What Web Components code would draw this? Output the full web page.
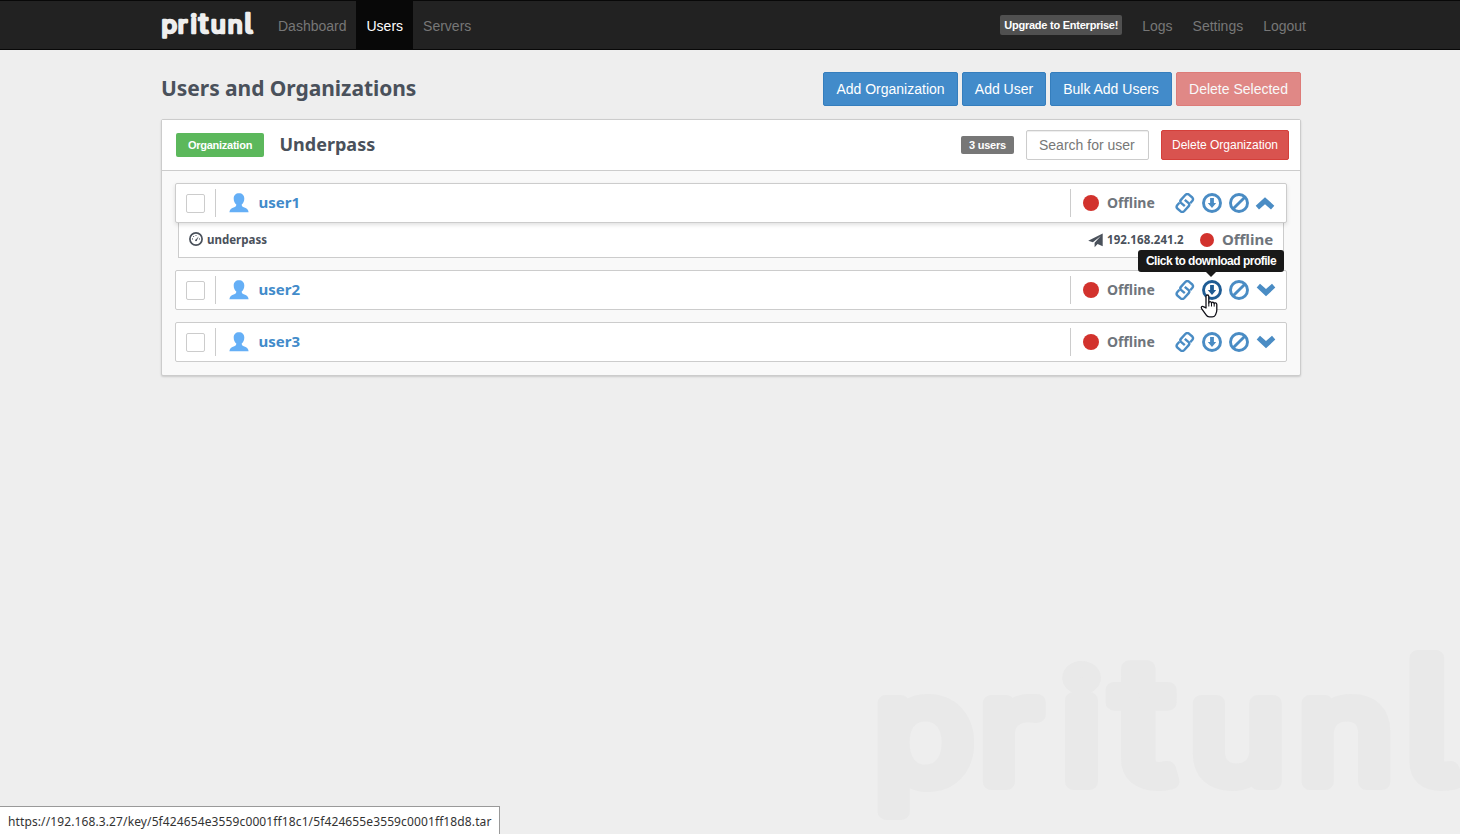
<!DOCTYPE html>
<html lang="en">
<head>
<meta charset="utf-8">
<title>Pritunl</title>
<style>
html,body{margin:0;height:100%;overflow:hidden}
body{background:#eee;font:14px/20px "Liberation Sans",Arial,sans-serif;color:#4a515b;--head:"Noto Sans","Open Sans",sans-serif}
</style>
</head>
<body>
<pt-app></pt-app>
<script>
const def = (name, html, setup) => customElements.define(name, class extends HTMLElement {
  constructor() {
    super();
    this.attachShadow({mode: 'open'}).innerHTML = html;
  }
  connectedCallback() { if (setup) setup(this, this.shadowRoot); }
});

const linkHalf = 'M9.800 13.200L6 9.900Q4.600 8.400 5.900 6.900L10.300 2Q12 .3 13.900 1.600L17.300 4.500Q18.700 6 17.400 7.700L15.200 10.200';
const icons = {
  user: ['0 0 20 20', '<path fill="#65aff6" d="M10 .3c3.200 0 5.300 2 5.300 5.300 0 2.700-1 4.800-2.600 6 0 1.500.6 2.200 2 2.700 2.900 1 4.700 2.100 4.900 5H.4c.2-2.900 2-4 4.900-5 1.400-.5 2-1.200 2-2.700-1.600-1.200-2.600-3.300-2.600-6C4.700 2.300 6.800.3 10 .3z"/>'],
  link: ['0 0 20 20', `<g fill="none" stroke="currentColor" stroke-width="2.400" stroke-linejoin="round"><path d="${linkHalf}"/><path transform="rotate(180 9.800 10)" d="${linkHalf}"/></g>`],
  down: ['0 0 20 20', '<circle cx="10" cy="10" r="8.500" fill="none" stroke="currentColor" stroke-width="2.900"/><path fill="currentColor" d="M8.100 5h3.800v5h2.300L10 14.900 5.800 10h2.300z"/>'],
  ban: ['0 0 20 20', '<g fill="none" stroke="currentColor" stroke-width="2.900"><circle cx="10" cy="10" r="8.500"/><path d="M4.200 15.800L15.800 4.200"/></g>'],
  up: ['0 0 20 20', '<path fill="currentColor" d="M10 4.300l9.300 8.400-3.300 3.900-6-5.300-6 5.300-3.300-3.900z"/>'],
  more: ['0 0 20 20', '<path fill="currentColor" d="M10 16.300L.7 7.600 4 3.800l6 5.300 6-5.300 3.300 3.800z"/>'],
  gauge: ['0 0 14 14', '<circle cx="7" cy="7" r="6.100" fill="none" stroke="currentColor" stroke-width="1.700"/><path d="M6.200 8.200l3.600-3.900-2.200 4.800z" fill="currentColor"/><g fill="currentColor"><circle cx="3.500" cy="6.900" r=".6"/><circle cx="4.600" cy="4.500" r=".6"/><circle cx="7" cy="3.500" r=".6"/><circle cx="10.500" cy="6.900" r=".6"/><circle cx="7" cy="8.400" r=".8"/></g>'],
  plane: ['0 0 15 15', '<path fill="currentColor" d="M14.700.4v12.800L9.600 11 6.600 14.200V9.700L12.800 3 4.900 9.200.2 7.800z"/>']
};
def('pt-icon', '<style>:host{display:block;width:20px;height:20px;flex:none}svg{display:block;width:100%;height:100%}</style><svg></svg>', (h, r) => {
  const [box, body] = icons[h.getAttribute('name')];
  const s = r.querySelector('svg');
  s.setAttribute('viewBox', box);
  s.innerHTML = body;
});

def('pt-wordmark', `<style>:host{display:block;line-height:0}svg{display:block;width:100%;height:100%;overflow:visible}
text{font:400 145px Inter,sans-serif;font-feature-settings:"cv05";fill:currentColor;stroke:currentColor;stroke-width:16px;stroke-linejoin:round}
.i{font-size:151px}.t{font-size:168px}.l{font-size:170px}</style>
<svg viewBox="0 0 582 182" preserveAspectRatio="none"><text transform="scale(1.120 1)" y="132" x="-3.500 90.500 163.500 209.500 278 375 469.500">pr<tspan class="i">i</tspan><tspan class="t">t</tspan>un<tspan class="l">l</tspan></text></svg>`);

def('pt-nav-link', `<style>:host{display:block;height:48px;line-height:50px;padding:0 10px;color:#777}
:host([active]){background:#080808;color:#fff;margin-left:-1px;padding-left:11px}</style><slot></slot>`);

def('pt-navbar', `<style>:host{display:flex;height:48px;background:#222;border:solid #080808;border-width:1px 0;padding:0 144px 0 162px}
pt-wordmark{width:91px;height:29.500px;margin:11px 15px 0 0;color:#eee}
.sp{flex:1}
.up{align-self:flex-start;box-sizing:border-box;margin:14px 10px 0 0;width:122px;height:20px;background:#505050;border-radius:2px;color:#fff;font:bold 11px/20px "Liberation Sans",sans-serif;letter-spacing:-.24px;text-align:center;white-space:nowrap}</style>
<pt-wordmark></pt-wordmark><pt-nav-link>Dashboard</pt-nav-link><pt-nav-link active>Users</pt-nav-link><pt-nav-link>Servers</pt-nav-link>
<div class="sp"></div><div class="up">Upgrade to Enterprise!</div><pt-nav-link>Logs</pt-nav-link><pt-nav-link>Settings</pt-nav-link><pt-nav-link>Logout</pt-nav-link>`);

def('pt-button', `<style>:host{display:block;box-sizing:border-box;height:34px;line-height:32px;border:1px solid #357ebd;background:#428bca;color:#fff;border-radius:2px;text-align:center;white-space:nowrap}
:host([kind=danger]){background:#d9534f;border-color:#d43f3a}
:host([disabled]){opacity:.65}
:host([small]){height:30px;line-height:28px;font-size:12px}</style><slot></slot>`);

def('pt-status', `<style>:host{display:flex;align-items:center;font:bold 14px/20px var(--head);color:#6f757c}
i{flex:none;width:16px;height:16px;border-radius:50%;background:#d2322d;margin-right:8px}
:host([sub]) i{width:14px;height:14px}
:host([sub]) span{position:relative;top:-1px}</style><i></i><span>Offline</span>`);

def('pt-tooltip', `<style>:host{position:absolute;z-index:2;width:146px;height:22px;border-radius:3px;background:#191919;color:#fff;font:bold 12px/22px "Liberation Sans",sans-serif;text-align:center;white-space:nowrap;letter-spacing:-.5px}
:host::after{content:"";position:absolute;left:68px;top:22px;border:5px solid transparent;border-top-color:#191919;border-bottom:0}</style><slot></slot>`);

def('pt-cursor', `<style>:host{position:absolute;z-index:3;width:18px;height:24px}svg{display:block}</style>
<svg width="18" height="24" viewBox="0 0 18 24"><path fill="#fff" stroke="#101018" stroke-width="1.300" stroke-linejoin="round" d="M6 14V2.500C6 .5 8.800.5 8.800 2.500V9c0-1.800 2.700-1.700 2.700.3 0-1.600 2.700-1.400 2.700.5 0-1.400 2.600-1.200 2.600.6V16c0 3-1 4-1.600 5.300-.6 1.100-1.500 1.600-3 1.600H9.400c-1.400 0-2.500-.6-3.300-2L1.600 14.600c-1-1.800.8-3 2.300-1.700z"/><path stroke="#101018" d="M8.800 8.500v4M11.500 9v3.500M14.200 9.600v3" fill="none"/></svg>`);

def('pt-user', `<style>:host{display:block}
.row{position:relative;box-sizing:border-box;height:40px;border:1px solid #ccc;border-radius:2px;background:#fff;display:flex;align-items:center;padding:0 10.500px 0 10px}
:host([open]) .row{z-index:1;box-shadow:0 2px 4px rgba(0,0,0,.12)}
:host([hover]) .row{z-index:2}
.box{box-sizing:border-box;width:19px;height:19px;border:1px solid #ccc;border-radius:2px;margin-top:1px}
.bar{width:1px;height:28px;background:#ccc}
.box+.bar{margin:0 12.500px 0 10px}
.name{flex:1;margin:-2px 0 0 10px;font:bold 15px/20px var(--head);color:#428bca}
pt-status{width:89px;margin-left:12px;margin-right:2.500px}
.tools{display:grid;grid-template-columns:20px 20px 20px 20px;column-gap:7px;color:#4a8cc4;position:relative}
:host([open]) .tools pt-icon:last-of-type{margin-left:-1px}
:host(:not([open])) .tools pt-icon:last-of-type{margin-left:.5px}
.hot{color:#1f5c94}
pt-tooltip{left:-36.500px;top:-30px}
pt-cursor{left:25px;top:14px}</style>
<div class="row"><div class="box"></div><div class="bar"></div><pt-icon name="user"></pt-icon><div class="name"><slot name="name"></slot></div>
<div class="bar"></div><pt-status></pt-status><div class="tools"></div></div><slot></slot>`, (h, r) => {
  const hot = h.hasAttribute('hover');
  r.querySelector('.tools').innerHTML = `<pt-icon name="link"></pt-icon><pt-icon name="down" class="${hot ? 'hot' : ''}"></pt-icon><pt-icon name="ban"></pt-icon><pt-icon name="${h.hasAttribute('open') ? 'up' : 'more'}"></pt-icon>` +
    (hot ? '<pt-tooltip>Click to download profile</pt-tooltip><pt-cursor></pt-cursor>' : '');
});

def('pt-session', `<style>:host{box-sizing:border-box;display:flex;align-items:center;height:35px;margin:0 3px;border:1px solid #ccc;border-top:0;background:#fff;padding:0 10px;font:bold 11.500px/20px var(--head);color:#4a515b}
.g{width:14px;height:14px;margin:-3px 4px 0 0}.n{flex:1}
.p{width:15px;height:15px;margin-right:4px}
.ip{width:78px;margin-right:15px;font-size:11.500px;letter-spacing:.1px}
pt-status{font-size:15px;width:73px}</style>
<pt-icon class="g" name="gauge"></pt-icon><span class="n"><slot></slot></span><pt-icon class="p" name="plane"></pt-icon><span class="ip"><slot name="ip"></slot></span><pt-status sub></pt-status>`);

def('pt-org', `<style>:host{display:block;box-sizing:border-box;height:257px;border:1px solid #ccc;border-radius:2px;background:#f9f9f9;box-shadow:0 1px 2px rgba(0,0,0,.15)}
header{height:50px;border-bottom:1px solid #ccc;background:#fff;display:flex;align-items:center;padding:0 11px 0 14px}
.tag{width:88px;height:24px;background:#5cb85c;border-radius:2px;color:#fff;font:bold 11px/24px "Liberation Sans",sans-serif;letter-spacing:-.25px;text-align:center}
h2{flex:1;margin:-2px 0 0 15.500px;font:bold 18px/24px var(--head)}
.count{width:53px;height:18px;margin-right:12px;border-radius:2px;background:#777;color:#fff;font:bold 11px/18px "Liberation Sans",sans-serif;letter-spacing:-.25px;text-align:center}
.search{box-sizing:border-box;width:123px;height:30px;border:1px solid #ccc;border-radius:2px;background:#fff;box-shadow:inset 0 1px 1px rgba(0,0,0,.075);padding:0 12px;line-height:28px;color:#777;margin-right:12px;white-space:nowrap}
pt-button{width:128px}
.list{display:grid;row-gap:12px;padding:12px 13px}</style>
<header><div class="tag">Organization</div><h2><slot name="title"></slot></h2><div class="count">3 users</div><div class="search">Search for user</div><pt-button kind="danger" small>Delete Organization</pt-button></header>
<div class="list"><slot></slot></div>`);

def('pt-app', `<style>:host{display:block;position:relative;height:834px;overflow:hidden}
main{position:relative;width:1140px;margin-left:161px}
.top{display:flex;gap:4px;padding-top:22px;height:47px}
h1{flex:1;margin:0;font:bold 21px/32px var(--head);letter-spacing:-.05px}
.mark{position:absolute;left:878px;top:650px;width:582px;height:182px;color:#e9e9e9}
.url{position:absolute;left:0;bottom:0;box-sizing:border-box;width:500px;height:28px;border:solid #999;border-width:1px 1px 0 0;background:#fff;padding-left:8px;font:12px/29px "Noto Sans","Open Sans",sans-serif;letter-spacing:.115px;color:#333;white-space:nowrap}</style>
<pt-wordmark class="mark"></pt-wordmark>
<pt-navbar></pt-navbar>
<main><div class="top"><h1>Users and Organizations</h1>
<pt-button style="width:135px">Add Organization</pt-button><pt-button style="width:84px">Add User</pt-button><pt-button style="width:122px">Bulk Add Users</pt-button><pt-button kind="danger" disabled style="width:125px">Delete Selected</pt-button></div>
<pt-org><span slot="title">Underpass</span>
<pt-user open><span slot="name">user1</span><pt-session>underpass<span slot="ip">192.168.241.2</span></pt-session></pt-user>
<pt-user hover><span slot="name">user2</span></pt-user>
<pt-user><span slot="name">user3</span></pt-user></pt-org></main>
<div class="url">https://192.168.3.27/key/5f424654e3559c0001ff18c1/5f424655e3559c0001ff18d8.tar</div>`);
</script>
</body>
</html>
